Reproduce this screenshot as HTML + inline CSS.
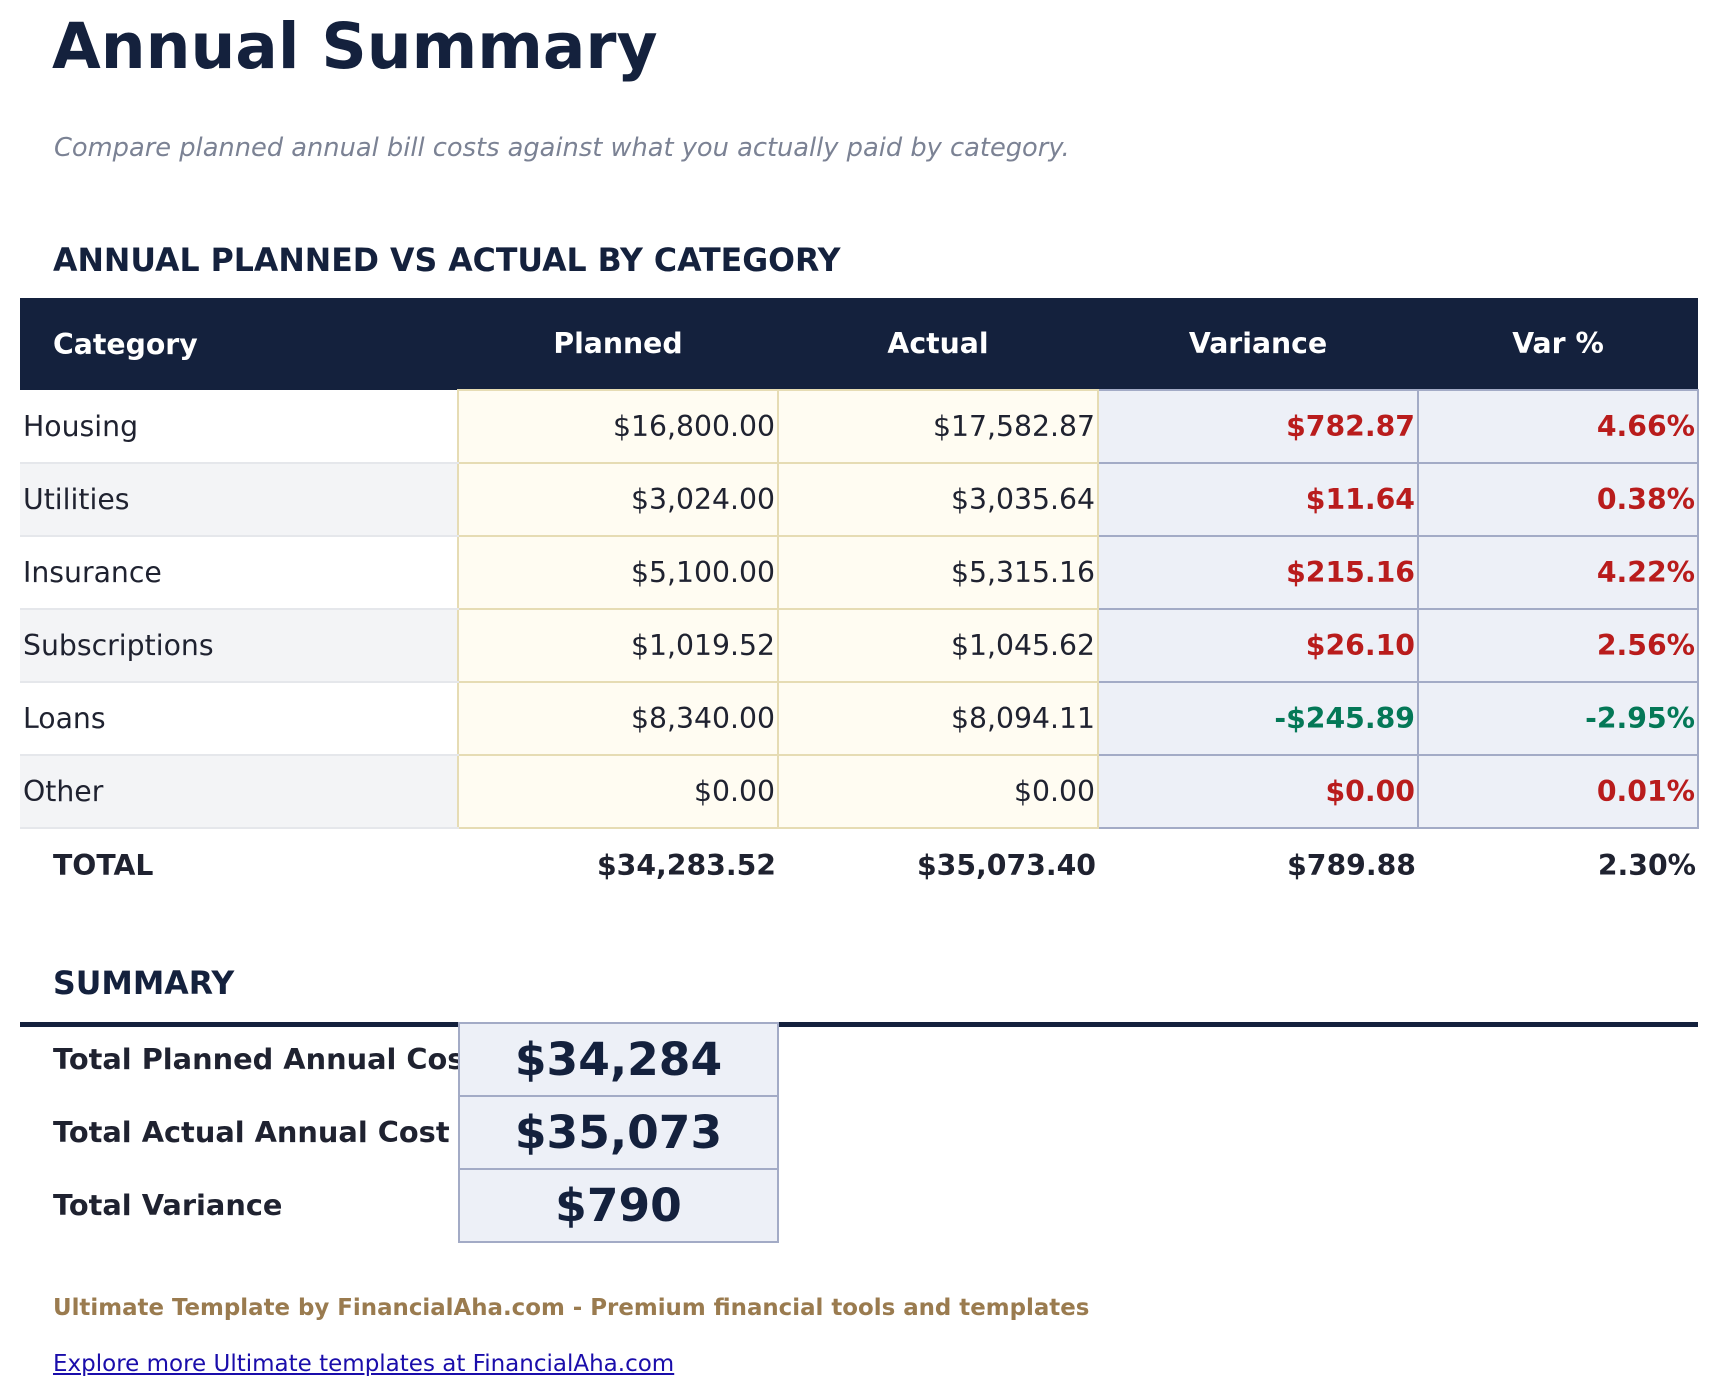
<!DOCTYPE html>
<html><head><meta charset="utf-8"><style>
*{margin:0;padding:0;box-sizing:border-box}
body{width:1719px;height:1397px;background:#fff;font-family:"DejaVu Sans","Liberation Sans",sans-serif;color:#1f2230;position:relative;overflow:hidden}
.a{position:absolute;white-space:nowrap}
h1{position:absolute;left:52px;top:10px;font-size:63px;font-weight:bold;color:#14213d}
.sub{left:54px;top:133px;font-size:25.7px;font-style:italic;color:#7b8294}
.sec{left:53px;font-size:31.6px;font-weight:bold;color:#14213d}
table{position:absolute;left:20px;top:298px;border-collapse:collapse;table-layout:fixed;width:1678px;font-size:28.3px}
td,th{height:73px;padding:0 2px;white-space:nowrap;overflow:hidden}
th{background:#14213d;color:#fff;height:92px;font-weight:bold;text-align:center}
th.l{text-align:left;padding-left:33px}
td{text-align:right}
td.c{text-align:left;padding-left:3px;border-bottom:2px solid #e5e7eb}
tr.alt td.c{background:#f3f4f6}
td.y{background:#fffcf2;border:2px solid #e6dcb4}
td.v{background:#edf0f7;border:2px solid #a3abc6;font-weight:bold}
.r{color:#b91c1c}.g{color:#047857}
tr.tot td{font-weight:bold;border:none;background:#fff}
.line{left:20px;top:1022px;width:1678px;height:5px;background:#14213d}
.lab{left:53px;font-size:28.8px;font-weight:bold;color:#1f2230}
.box{left:458px;width:321px;height:75px;background:#edf0f7;border:2px solid #a3abc6;text-align:center;font-size:45.5px;font-weight:bold;color:#14213d;line-height:71px}
</style></head><body>
<h1>Annual Summary</h1>
<div class="a sub">Compare planned annual bill costs against what you actually paid by category.</div>
<div class="a sec" style="top:243px">ANNUAL PLANNED VS ACTUAL BY CATEGORY</div>
<table>
<colgroup><col style="width:438px"><col style="width:320px"><col style="width:320px"><col style="width:320px"><col style="width:280px"></colgroup>
<tr><th class="l">Category</th><th>Planned</th><th>Actual</th><th>Variance</th><th>Var %</th></tr>
<tr><td class="c">Housing</td><td class="y">$16,800.00</td><td class="y">$17,582.87</td><td class="v r">$782.87</td><td class="v r">4.66%</td></tr>
<tr class="alt"><td class="c">Utilities</td><td class="y">$3,024.00</td><td class="y">$3,035.64</td><td class="v r">$11.64</td><td class="v r">0.38%</td></tr>
<tr><td class="c">Insurance</td><td class="y">$5,100.00</td><td class="y">$5,315.16</td><td class="v r">$215.16</td><td class="v r">4.22%</td></tr>
<tr class="alt"><td class="c">Subscriptions</td><td class="y">$1,019.52</td><td class="y">$1,045.62</td><td class="v r">$26.10</td><td class="v r">2.56%</td></tr>
<tr><td class="c">Loans</td><td class="y">$8,340.00</td><td class="y">$8,094.11</td><td class="v g">-$245.89</td><td class="v g">-2.95%</td></tr>
<tr class="alt"><td class="c">Other</td><td class="y">$0.00</td><td class="y">$0.00</td><td class="v r">$0.00</td><td class="v r">0.01%</td></tr>
<tr class="tot"><td style="text-align:left;padding-left:33px">TOTAL</td><td>$34,283.52</td><td>$35,073.40</td><td>$789.88</td><td>2.30%</td></tr>
</table>
<div class="a sec" style="top:966px">SUMMARY</div>
<div class="a line"></div>
<div class="a lab" style="top:1042px;width:405px;overflow:hidden">Total Planned Annual Cost</div>
<div class="a lab" style="top:1115px">Total Actual Annual Cost</div>
<div class="a lab" style="top:1188px">Total Variance</div>
<div class="a box" style="top:1022px">$34,284</div>
<div class="a box" style="top:1095px">$35,073</div>
<div class="a box" style="top:1168px">$790</div>
<div class="a" style="left:53px;top:1295px;font-size:22.9px;font-weight:bold;color:#9a7b4f">Ultimate Template by FinancialAha.com - Premium financial tools and templates</div>
<div class="a" style="left:53px;top:1351px;font-size:23px;color:#1a0dab;text-decoration:underline">Explore more Ultimate templates at FinancialAha.com</div>
</body></html>
